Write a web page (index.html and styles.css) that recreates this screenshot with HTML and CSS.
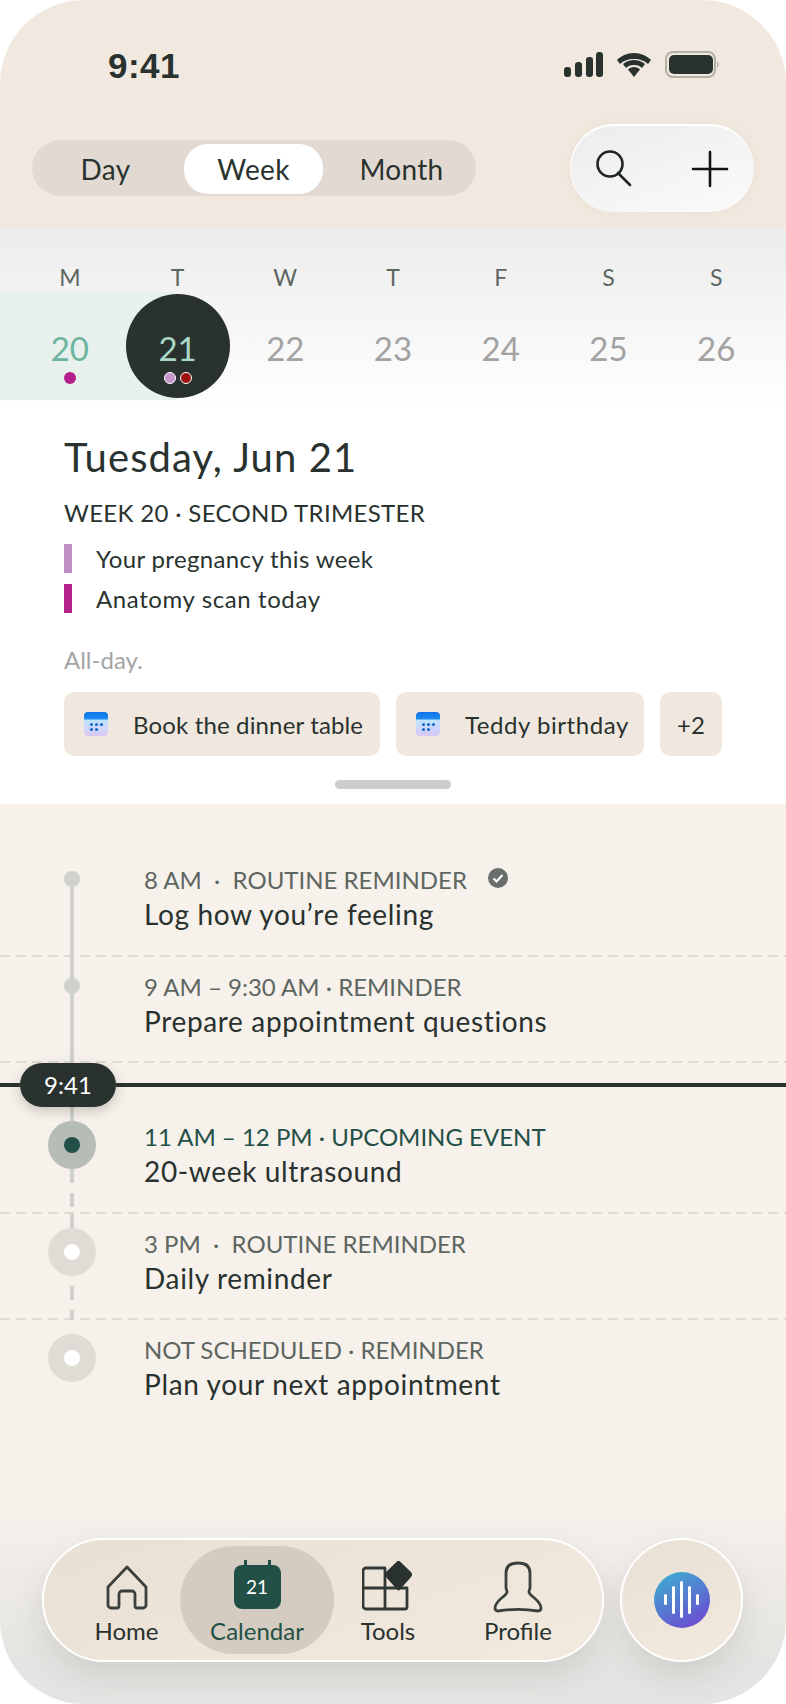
FILE: index.html
```html
<!DOCTYPE html>
<html lang="en">
  <head>
    <meta charset="UTF-8" />
    <meta name="viewport" content="width=device-width, initial-scale=1.0" />
    <title>Calendar</title>
    <link rel="stylesheet" href="styles.css">
  </head>
  <body>
    <div class="phone">
      <header class="top">
        <div class="status">
          <span class="clock">9:41</span>
          <svg class="status-icons" width="156" height="28" viewBox="0 0 156 28">
            <g fill="#29322e">
              <rect x="1" y="17" width="7" height="10" rx="3"/>
              <rect x="12" y="12" width="7" height="15" rx="3"/>
              <rect x="23" y="7" width="7" height="20" rx="3"/>
              <rect x="33" y="2" width="7" height="25" rx="3"/>
              <path d="M71 9c-6 0-11 2-14 5l-3-4c4-4 10-7 17-7s13 3 17 7l-3 4c-3-3-8-5-14-5z"/>
              <path d="M71 15c-3.500 0-6 1-8 3l-3-4c3-2.500 7-4 11-4s8 1.500 11 4l-3 4c-2-2-4.500-3-8-3z"/>
              <path d="M71 17c2.500 0 4.500 1 6 2.500l-6 7.500-6-7.500c1.500-1.500 3.500-2.500 6-2.500z"/>
              <rect x="106" y="5" width="44" height="19" rx="5"/>
            </g>
            <rect x="103" y="2" width="49" height="25" rx="7" fill="none" stroke="#b4b0a6" stroke-width="2"/>
            <path d="M154 11c2 .5 2 6 0 7z" fill="#b4b0a6"/>
          </svg>
        </div>
        <div class="toolbar">
          <div class="segments">
            <span class="segment segment-day">Day</span>
            <span class="segment segment-on">Week</span>
            <span class="segment segment-month">Month</span>
          </div>
          <div class="actions">
            <svg width="40" height="40" viewBox="0 0 40 40" fill="none" stroke="#1e2421" stroke-width="2.6">
              <circle cx="16" cy="15" r="12.500"/>
              <path d="M24 24l12 12" stroke-linecap="round"/>
            </svg>
            <svg width="38" height="38" viewBox="0 0 38 38" fill="none" stroke="#111512" stroke-width="2.600" stroke-linecap="round">
              <path d="M19 2v34M2 19h34"/>
            </svg>
          </div>
        </div>
      </header>

      <section class="week">
        <div class="week-labels">
          <span>M</span><span>T</span><span>W</span><span>T</span><span>F</span><span>S</span><span>S</span>
        </div>
        <div class="week-days">
          <div class="day day-past">20<span class="dots"><i class="dot dot-magenta"></i></span></div>
          <div class="day day-today">21<span class="dots"><i class="dot dot-lilac"></i><i class="dot dot-red"></i></span></div>
          <div class="day">22</div>
          <div class="day">23</div>
          <div class="day">24</div>
          <div class="day">25</div>
          <div class="day">26</div>
        </div>
      </section>

      <section class="detail">
        <h1>Tuesday, Jun 21</h1>
        <p class="trimester">WEEK 20 · SECOND TRIMESTER</p>
        <p class="note note-lilac">Your pregnancy this week</p>
        <p class="note note-magenta">Anatomy scan today</p>
        <p class="allday">All-day.</p>
        <div class="chips">
          <div class="chip chip-dinner">
            <span class="cal-icon"><i></i></span>
            Book the dinner table
          </div>
          <div class="chip chip-teddy">
            <span class="cal-icon"><i></i></span>
            Teddy birthday
          </div>
          <div class="chip chip-more">+2</div>
        </div>
        <div class="handle"></div>
      </section>

      <section class="timeline">
        <div class="row row-done row-first">
          <div class="rail"><span class="point"></span></div>
          <div class="row-text">
            <div class="meta">8 AM &nbsp;·&nbsp; ROUTINE REMINDER
              <svg class="check" width="20" height="20" viewBox="0 0 20 20">
                <circle cx="10" cy="10" r="10" fill="#696e6a"/>
                <path d="M5.500 10.500l3 3 6-6.500" fill="none" stroke="#fff" stroke-width="2.200"/>
              </svg>
            </div>
            <div class="name">Log how you’re feeling</div>
          </div>
        </div>
        <div class="row row-done">
          <div class="rail"><span class="point"></span></div>
          <div class="row-text">
            <div class="meta">9 AM – 9:30 AM · REMINDER</div>
            <div class="name">Prepare appointment questions</div>
          </div>
        </div>

        <div class="now">
          <span class="now-stub"></span>
          <span class="now-pill">9:41</span>
          <span class="now-rule"></span>
        </div>

        <div class="row row-next">
          <div class="rail"><span class="ring ring-next"></span></div>
          <div class="row-text">
            <div class="meta">11 AM – 12 PM · UPCOMING EVENT</div>
            <div class="name">20-week ultrasound</div>
          </div>
        </div>
        <div class="row row-later">
          <div class="rail"><span class="ring"></span></div>
          <div class="row-text">
            <div class="meta">3 PM &nbsp;·&nbsp; ROUTINE REMINDER</div>
            <div class="name">Daily reminder</div>
          </div>
        </div>
        <div class="row row-last">
          <div class="rail"><span class="ring"></span></div>
          <div class="row-text">
            <div class="meta">NOT SCHEDULED · REMINDER</div>
            <div class="name">Plan your next appointment</div>
          </div>
        </div>

        <nav class="dock">
          <div class="tabs">
            <div class="tab tab-home">
              <span class="tab-icon">
                <svg width="44" height="48" viewBox="0 0 44 48" fill="none" stroke="#3a403c" stroke-width="2.800" stroke-linejoin="round">
                  <path d="M3 24L22 4l19 20v18a3 3 0 0 1-3 3h-6a2 2 0 0 1-2-2V31a3 3 0 0 0-3-3h-10a3 3 0 0 0-3 3v12a2 2 0 0 1-2 2H6a3 3 0 0 1-3-3z"/>
                </svg>
              </span>
              Home
            </div>
            <div class="tab tab-on">
              <span class="tab-icon"><span class="tab-cal">21</span></span>
              Calendar
            </div>
            <div class="tab">
              <span class="tab-icon">
                <svg width="52" height="50" viewBox="0 0 52 50" fill="none" stroke="#323935" stroke-width="2.800" stroke-linejoin="round">
                  <path d="M24 7H4a3 3 0 0 0-3 3v35a3 3 0 0 0 3 3h39a2 2 0 0 0 2-2V27H1M23 7v41"/>
                  <path d="M36.500 1L48 12a2 2 0 0 1 0 3L36.500 28 25 15a2 2 0 0 1 0-3z" fill="#29322e" stroke="#29322e"/>
                </svg>
              </span>
              Tools
            </div>
            <div class="tab">
              <span class="tab-icon">
                <svg class="icon-profile" width="50" height="52" viewBox="0 0 50 52" fill="none" stroke="#3a403c" stroke-width="2.800" stroke-linejoin="round">
                  <path d="M13 26V12C13 5 18 2 25 2s12 3 12 10v14c0 3-1 3-1 5 0 4 12 8 12 16 0 2-1 3-3 3-13-2-27-2-40 0-2 0-3-1-3-3 0-8 12-12 12-16 0-2-1-2-1-5z"/>
                </svg>
              </span>
              Profile
            </div>
          </div>
          <div class="voice">
            <span class="voice-orb">
              <i class="bar bar-s"></i><i class="bar bar-m"></i><i class="bar bar-l"></i><i class="bar bar-m"></i><i class="bar bar-s"></i>
            </span>
          </div>
        </nav>
      </section>
    </div>
  </body>
</html>
```

FILE: styles.css
```css
* {
  box-sizing: border-box;
}

body {
  margin: 0;
  background: #fff;
  font-family: "Lato", "Open Sans", sans-serif;
  color: #29322e;
}

p,
h1 {
  margin: 0;
}

.phone {
  width: 786px;
  height: 1704px;
  border-radius: 84px;
  overflow: hidden;
  display: flex;
  flex-direction: column;
}

/* header */
.top {
  height: 228px;
  background: #f1e9df;
}

.status {
  height: 124px;
  padding: 46px 67px 0 108px;
  display: flex;
  justify-content: space-between;
  align-items: flex-start;
}

.clock {
  font-family: "Liberation Sans", sans-serif;
  font-weight: 700;
  font-size: 35px;
  line-height: 40px;
  letter-spacing: 0.5px;
}

.status-icons {
  margin-top: 4px;
}

.toolbar {
  padding: 0 32px;
  display: flex;
  justify-content: space-between;
  align-items: center;
}

.segments {
  width: 444px;
  height: 56px;
  padding: 4px;
  border-radius: 28px;
  background: #e2dad2;
  display: grid;
  grid-template-columns: 148px 139px 1fr;
}

.segment {
  border-radius: 24px;
  font-size: 28px;
  line-height: 50px;
  letter-spacing: 0.3px;
  text-align: center;
}

.segment-day {
  padding-right: 9px;
}

.segment-month {
  padding-left: 8px;
}

.segment-on {
  background: #fff;
}

.actions {
  width: 184px;
  height: 88px;
  border-radius: 44px;
  padding: 0 25px 0 23px;
  background: linear-gradient(160deg, #ececec, #fbfbfb);
  border-top: 2px solid #fff;
  border-left: 1px solid #fff;
  box-shadow: 0 0 14px rgba(120, 100, 80, 0.06);
  display: flex;
  justify-content: space-between;
  align-items: center;
}

/* week strip */
.week {
  height: 182px;
  padding: 0;
  background: linear-gradient(180deg, #ececec, #fff);
}

.week-labels {
  height: 64px;
  padding: 34px 16px 0;
  display: grid;
  grid-template-columns: repeat(7, 1fr);
  font-size: 23px;
  line-height: 30px;
  text-align: center;
  color: #5d6661;
}

.week-days {
  height: 108px;
  padding: 0 16px;
  display: grid;
  grid-template-columns: repeat(7, 1fr);
  background: linear-gradient(90deg, #e9f1ee 177px, transparent 177px);
}

.day {
  position: relative;
  padding-top: 36px;
  font-size: 33px;
  line-height: 40px;
  text-align: center;
  color: #a2a2a2;
}

.day-past {
  color: #6db59f;
}

.day-today {
  color: #a9d9c8;
  z-index: 0;
}

.day-today::before {
  content: "";
  position: absolute;
  z-index: -1;
  left: 2px;
  top: 2px;
  width: 104px;
  height: 104px;
  border-radius: 50%;
  background: #29322e;
}

.dots {
  display: flex;
  justify-content: center;
  gap: 4px;
  margin-top: 4px;
}

.dot {
  width: 12px;
  height: 12px;
  border-radius: 50%;
  border: 1px solid #fff;
}

.dot-magenta {
  background: #b5218a;
  border-color: transparent;
}

.dot-lilac {
  background: #c596c8;
}

.dot-red {
  background: #9e1010;
}

/* day detail */
.detail {
  height: 394px;
  padding: 22px 64px 0;
  background: #fff;
}

h1 {
  font-weight: 400;
  font-size: 40px;
  line-height: 50px;
  letter-spacing: 1.1px;
}

.trimester {
  margin-top: 16px;
  font-size: 24px;
  line-height: 30px;
  letter-spacing: 0.33px;
}

.note {
  position: relative;
  padding-left: 32px;
  font-size: 24px;
  line-height: 30px;
  letter-spacing: 0.36px;
}

.note::before {
  content: "";
  position: absolute;
  left: 0;
  top: 0;
  width: 8px;
  height: 29px;
}

.note-lilac {
  margin-top: 16px;
}

.note-magenta {
  margin-top: 10px;
  letter-spacing: 0.6px;
}

.note-lilac::before {
  background: #c18ec4;
}

.note-magenta::before {
  background: #b5218a;
}

.allday {
  margin-top: 31px;
  font-size: 24px;
  line-height: 30px;
  color: #a5a5a5;
}

.chips {
  margin-top: 17px;
  display: grid;
  grid-template-columns: 316px 248px 62px;
  gap: 16px;
}

.chip {
  height: 64px;
  padding: 0 0 0 20px;
  border-radius: 10px;
  background: #f0e8df;
  display: flex;
  align-items: center;
  gap: 25px;
  font-size: 24px;
  white-space: nowrap;
}

.chip-dinner {
  letter-spacing: 0.15px;
}

.chip-teddy {
  letter-spacing: 0.55px;
}

.chip-more {
  padding: 0;
  justify-content: center;
}

.cal-icon {
  position: relative;
  width: 24px;
  height: 24px;
  border-radius: 4px;
  background: linear-gradient(180deg, #0f73ea 0, #1c8bf2 7px, #bfe3ff 8px, #d9c9f6 100%);
}

/* three + two dots, all as shadows of one */
.cal-icon i {
  position: absolute;
  left: 6px;
  top: 11px;
  width: 3px;
  height: 3px;
  border-radius: 50%;
  background: #1269c9;
  box-shadow: 5px 0 #1269c9, 10px 0 #1269c9, 0 5px #1269c9, 5px 5px #1269c9;
}

.handle {
  width: 116px;
  height: 9px;
  margin: 24px auto 0;
  border-radius: 5px;
  background: #cdcdcd;
}

/* timeline */
.timeline {
  flex: 1;
  padding-top: 46px;
  background: linear-gradient(180deg, #f7f1eb 0, #f7f1eb 696px, #e4e4e2 860px);
  display: flex;
  flex-direction: column;
}

.row {
  height: 106.500px;
  display: grid;
  grid-template-columns: 144px 1fr;
  background: linear-gradient(90deg, #dfdcd6 10px, transparent 10px) 0 100% / 16px 2px repeat-x;
}

.row-last {
  background: none;
}

.rail {
  position: relative;
}

.rail::before {
  content: "";
  position: absolute;
  left: 70px;
  top: 0;
  bottom: 0;
  width: 4px;
  background: #cfd1cf;
}

.point {
  position: absolute;
  left: 64px;
  top: 21px;
  width: 16px;
  height: 16px;
  border-radius: 50%;
  background: #cfd1cf;
}

.row-first .rail::before {
  top: 29px;
}

.row-next .rail::before,
.row-later .rail::before {
  background: repeating-linear-gradient(180deg, #cfd1cf 0 14px, transparent 14px 24px);
}

.row-next .rail::before {
  top: 62px;
}

.row-next .rail::after {
  content: "";
  position: absolute;
  left: 70px;
  top: 0;
  height: 14px;
  width: 4px;
  background: #cfd1cf;
}

.row-last .rail::before {
  display: none;
}

.ring {
  position: absolute;
  z-index: 1;
  left: 48px;
  top: 14px;
  width: 48px;
  height: 48px;
  border-radius: 50%;
  background: #dfdcd6;
  display: flex;
  align-items: center;
  justify-content: center;
}

.ring::after {
  content: "";
  width: 16px;
  height: 16px;
  border-radius: 50%;
  background: #fff;
}

.ring-next {
  background: #b6bdb7;
}

.ring-next::after {
  background: #235046;
}

.row-text {
  padding-top: 14px;
}

.meta {
  font-size: 24px;
  line-height: 32px;
  color: #5d6661;
  display: flex;
  align-items: center;
}

.check {
  margin-left: 21px;
  margin-top: -4px;
}

.name {
  font-size: 28px;
  line-height: 36px;
  letter-spacing: 0.65px;
  color: #29322e;
}

.row-next .meta {
  color: #235046;
}

.now {
  position: relative;
  z-index: 2;
  height: 44px;
  display: flex;
  align-items: center;
}

.now-stub {
  width: 20px;
  height: 4px;
  background: #29322e;
}

.now-rule {
  flex: 1;
  height: 4px;
  background: #29322e;
}

.now-pill {
  width: 96px;
  height: 44px;
  border-radius: 22px;
  background: #29322e;
  color: #fff;
  font-size: 24px;
  line-height: 44px;
  text-align: center;
  box-shadow: 0 4px 12px rgba(60, 50, 40, 0.25);
}

/* bottom navigation */
.dock {
  margin-top: 111px;
  padding: 0 43px 0 42px;
  display: flex;
  justify-content: space-between;
}

.tabs {
  width: 562px;
  height: 124px;
  padding: 6px 0 0 9px;
  border-radius: 62px;
  border: 2px solid #fff;
  background: linear-gradient(160deg, #e9e0d5, #f2eadf);
  box-shadow: 0 14px 30px rgba(90, 85, 75, 0.14);
  display: grid;
  grid-template-columns: 127px 154px 108px 152px;
}

.tab {
  height: 108px;
  border-radius: 54px;
  display: flex;
  flex-direction: column;
  align-items: center;
  font-size: 24px;
  line-height: 30px;
  color: #29322e;
}

.tab-home {
  padding-left: 20px;
}

.tab-icon {
  height: 70px;
  padding-bottom: 5px;
  display: flex;
  align-items: flex-end;
}

.icon-profile {
  margin-bottom: -2px;
}

.tab-on {
  background: #d5ccc1;
  color: #235046;
}

.tab-cal {
  position: relative;
  width: 47px;
  height: 44px;
  margin-bottom: 2px;
  border-radius: 8px;
  background: #235046;
  color: #fff;
  font-size: 19px;
  line-height: 44px;
  text-align: center;
}

/* the two rings of the calendar page */
.tab-cal::before {
  content: "";
  position: absolute;
  left: 10px;
  top: -5px;
  width: 3px;
  height: 6px;
  background: #235046;
  box-shadow: 24px 0 #235046;
}

.voice {
  width: 123px;
  height: 124px;
  border-radius: 50%;
  border: 2px solid #fff;
  background: linear-gradient(160deg, #e9e0d5, #f2eadf);
  box-shadow: 0 14px 30px rgba(90, 85, 75, 0.14);
  display: flex;
  align-items: center;
  justify-content: center;
}

.voice-orb {
  width: 56px;
  height: 56px;
  border-radius: 50%;
  background: linear-gradient(150deg, #3cb4d0, #7040d2);
  display: flex;
  align-items: center;
  justify-content: center;
  gap: 5px;
}

.bar {
  width: 3px;
  border-radius: 2px;
  background: #fff;
}

.bar-s {
  height: 11px;
}

.bar-m {
  height: 28px;
}

.bar-l {
  height: 37px;
}
```
